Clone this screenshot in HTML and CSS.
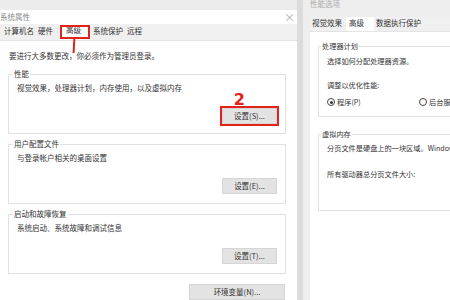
FILE: index.html
```html
<!DOCTYPE html>
<html lang="zh-CN">
<head>
    <meta charset="UTF-8">
    <title>系统属性</title>
    <link rel="stylesheet" href="styles.css">
</head>
<body>
    <div class="dlg-left">
        <div class="backdrop"></div>
        <div class="titlebar">
            <span class="title">系统属性</span>
            <span class="close">×</span>
        </div>
        <div class="tabs">
            <span class="tab">计算机名</span>
            <span class="tab">硬件</span>
            <span class="tab active marked">高级</span>
            <span class="tab">系统保护</span>
            <span class="tab">远程</span>
        </div>
        <div class="panel">
            <p class="intro">要进行大多数更改，你必须作为管理员登录。</p>

            <fieldset class="group">
                <legend>性能</legend>
                <p>视觉效果，处理器计划，内存使用，以及虚拟内存</p>
                <div class="btn-row">
                    <span class="note">2</span>
                    <button class="btn marked">设置(S)...</button>
                </div>
            </fieldset>

            <fieldset class="group">
                <legend>用户配置文件</legend>
                <p>与登录帐户相关的桌面设置</p>
                <div class="btn-row">
                    <button class="btn">设置(E)...</button>
                </div>
            </fieldset>

            <fieldset class="group">
                <legend>启动和故障恢复</legend>
                <p>系统启动、系统故障和调试信息</p>
                <div class="btn-row">
                    <button class="btn">设置(T)...</button>
                </div>
            </fieldset>

            <div class="btn-row env">
                <button class="btn wide">环境变量(N)...</button>
            </div>
        </div>
    </div>

    <div class="dlg-right">
        <div class="r-title">性能选项</div>
        <div class="r-tabs">
            <span class="tab">视觉效果</span>
            <span class="tab active">高级</span>
            <span class="tab">数据执行保护</span>
        </div>
        <div class="r-panel">
            <fieldset class="group r-group">
                <legend>处理器计划</legend>
                <p>选择如何分配处理器资源。</p>
                <p class="gap">调整以优化性能:</p>
                <div class="radios">
                    <label class="radio checked"><i></i>程序(P)</label>
                    <label class="radio"><i></i>后台服务(S)</label>
                </div>
            </fieldset>

            <fieldset class="group r-group vm">
                <legend>虚拟内存</legend>
                <p>分页文件是硬盘上的一块区域。Windows 当作 RAM 使用。</p>
                <p class="gap2">所有驱动器总分页文件大小:</p>
            </fieldset>
        </div>
    </div>
</body>
</html>
```

FILE: styles.css
```css
/* 整体 */
body {
    margin: 0;
    width: 450px;
    height: 300px;
    overflow: hidden;
    display: flex;
    background: #f0f0f0;
    font-family: "Noto Sans CJK SC", "Noto Sans", sans-serif;
    font-size: 7.5px;
    line-height: 10px;
    color: #333;
}

p {
    margin: 0;
    white-space: nowrap;
}

/* 左侧：系统属性 */
.dlg-left {
    width: 297px;
    display: flex;
    flex-direction: column;
    background: #fff;
}

.backdrop {
    height: 12px;
    background: #ececec;
}

.titlebar {
    height: 18px;
    display: flex;
    align-items: center;
    justify-content: space-between;
    background: #fff;
}

.title {
    color: #8a8a8a;
}

.close {
    color: #aaa;
    font-size: 11px;
    margin-right: 2px;
}

.tabs {
    height: 19px;
    display: flex;
    align-items: flex-end;
    padding-left: 2px;
    background: #f0f0f0;
    border-bottom: 1px solid #e4e4e4;
    box-sizing: border-box;
}

.tab {
    padding: 0 2px;
    height: 15px;
    line-height: 12px;
    white-space: nowrap;
}

.tabs .tab.active {
    margin-left: 4px;
    padding: 0 10px 0 7px;
    background: #fff;
    height: 16px;
    position: relative;
}

.tab.marked {
    outline: 2px solid #e2231a;
    outline-offset: -3px;
}

.tab.marked::after {
    content: "";
    position: absolute;
    left: 14px;
    top: 14px;
    width: 2px;
    height: 15px;
    background: #e2231a;
    transform: rotate(3deg);
}

.panel {
    flex: 1;
    padding: 10px 11px 0 8px;
}

.intro {
    padding-left: 1px;
}

.group {
    margin: 5px 0 0;
    padding: 4px 8px 9px 8px;
    border: 1px solid #e2e2e2;
    min-width: 0;
}

.panel .group:first-of-type {
    margin-top: 8px;
}

.group legend {
    padding: 0 1px;
    margin-left: -4px;
    line-height: 10px;
}

.btn-row {
    display: flex;
    justify-content: flex-end;
    margin-top: 15px;
    position: relative;
}

.btn {
    width: 55px;
    height: 16px;
    padding: 0;
    border: 1px solid #d6d6d6;
    background: #e3e3e3;
    font: inherit;
    color: #333;
}

.btn.marked {
    outline: 2px solid #e2231a;
    outline-offset: 0;
}

.note {
    position: absolute;
    right: 32px;
    bottom: 16px;
    color: #e2231a;
    font-family: "DejaVu Sans", sans-serif;
    font-weight: bold;
    font-size: 16px;
    line-height: 16px;
}

.env {
    margin: 10px 1px 0 0;
}

.btn.wide {
    width: 96px;
}

/* 右侧：性能选项 */
.dlg-right {
    flex: 1;
    display: flex;
    flex-direction: column;
    overflow: hidden;
    border-left: 6px solid #dcdcdc;
    background: #eeeeee;
}

.r-title {
    height: 17px;
    padding-left: 7px;
    line-height: 8px;
    color: #aaa;
}

.r-tabs {
    height: 15px;
    display: flex;
    align-items: flex-end;
    margin-left: 7px;
    background: #f0f0f0;
    border-bottom: 1px solid #e4e4e4;
    box-sizing: border-box;
}

.r-tabs .tab {
    height: 14px;
}

.r-tabs .tab.active {
    padding: 0 10px 0 3px;
    margin-left: 2px;
    background: #fff;
}

.r-panel {
    flex: 1;
    margin-left: 7px;
    padding: 9px 0 0 8px;
    background: #fff;
    font-size: 7.2px;
}

.r-group {
    width: 160px;
    margin: 0;
    padding: 5px 8px 9px 8px;
}

.r-group legend {
    margin-left: -6px;
}

.gap {
    margin-top: 14px;
}

.radios {
    display: flex;
    margin-top: 7px;
}

.radio {
    display: flex;
    align-items: center;
    gap: 2px;
    white-space: nowrap;
}

.radio:first-child {
    width: 92px;
}

.radio i {
    width: 6px;
    height: 6px;
    border: 1px solid #444;
    border-radius: 50%;
    box-sizing: content-box;
    position: relative;
}

.radio.checked i::after {
    content: "";
    position: absolute;
    left: 1.5px;
    top: 1.5px;
    width: 3px;
    height: 3px;
    border-radius: 50%;
    background: #333;
}

.vm {
    margin-top: 12px;
    padding: 4px 8px 31px 8px;
}

.gap2 {
    margin-top: 16px;
}
```
